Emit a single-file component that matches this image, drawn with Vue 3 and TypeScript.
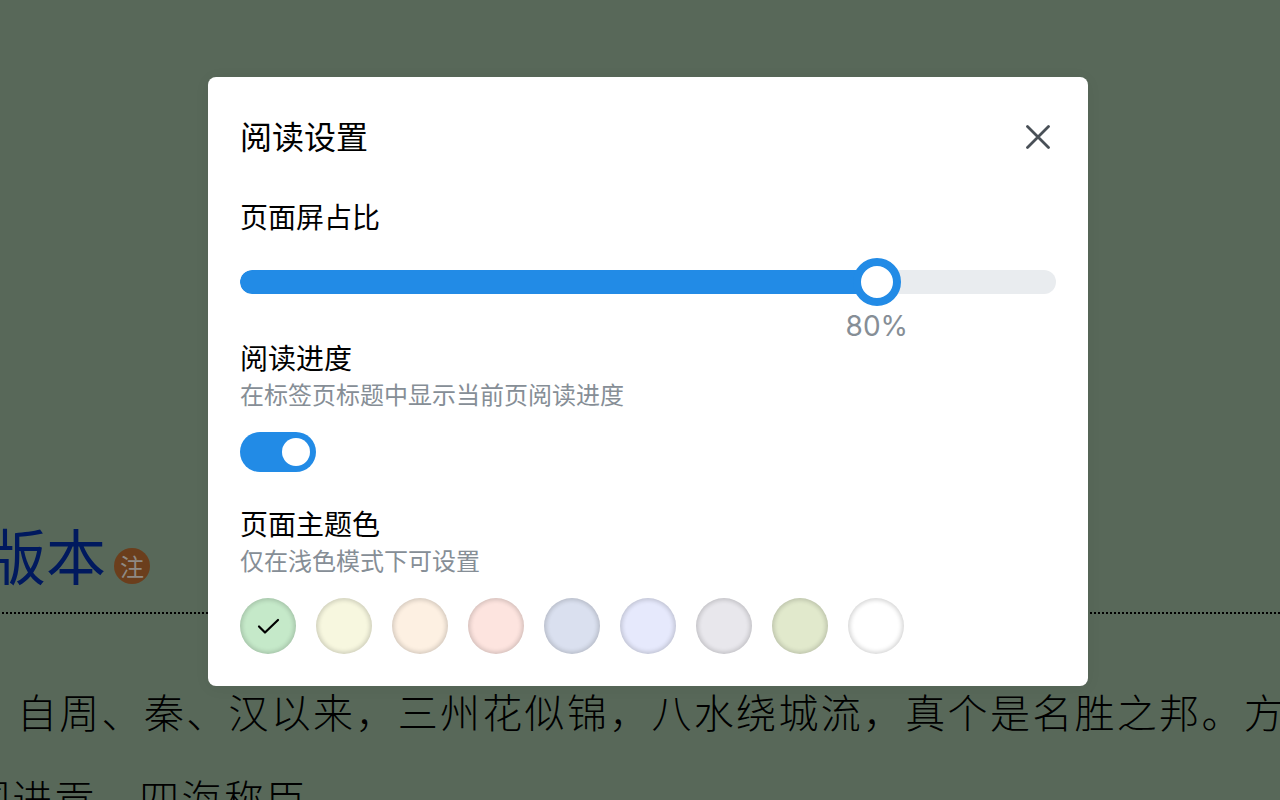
<script setup lang="ts">
import { ref } from 'vue'

const ratio = ref(80)
const progressOn = ref(true)
const selected = ref(0)
const swatches: string[] = [
  '#c5e9c9', '#f7f7df', '#fdf0e2', '#fde4df', '#dae0ef',
  '#e6e9fc', '#e8e7ec', '#e1e9cc', '#ffffff',
]
</script>

<template>
  <div class="page">
    <article class="article">
      <header class="headline">
        <h1 class="book-title">版本</h1>
        <span class="note-badge">注</span>
      </header>
      <p class="line first">自周、秦、汉以来，三州花似锦，八水绕城流，真个是名胜之邦。方</p>
      <p class="line second">国进贡，四海称臣</p>
    </article>

    <div class="overlay">
      <section class="modal">
        <div class="modal-head">
          <h2 class="modal-title">阅读设置</h2>
          <button class="close" type="button" aria-label="关闭">
            <svg width="24" height="24" viewBox="0 0 24 24" fill="none" stroke="#495057" stroke-width="2.8" stroke-linecap="round">
              <path d="M1.5 1.5 22.5 22.5M22.5 1.5 1.5 22.5" />
            </svg>
          </button>
        </div>

        <div class="section">
          <div class="label">页面屏占比</div>
          <div class="slider">
            <div class="track">
              <div class="fill" :style="{ width: `calc(${ratio}% + ${24 - ratio * 0.5}px)` }"></div>
            </div>
            <div class="thumb" :style="{ left: `calc(${ratio}% - ${ratio * 0.5}px)` }">
              <span class="thumb-value">{{ ratio }}%</span>
            </div>
          </div>
        </div>

        <div class="section">
          <div class="label">阅读进度</div>
          <div class="desc">在标签页标题中显示当前页阅读进度</div>
          <button class="switch" :class="{ on: progressOn }" type="button" @click="progressOn = !progressOn">
            <span class="knob"></span>
          </button>
        </div>

        <div class="section">
          <div class="label">页面主题色</div>
          <div class="desc">仅在浅色模式下可设置</div>
          <div class="swatches">
            <button
              v-for="(color, i) in swatches"
              :key="color"
              class="swatch"
              type="button"
              :style="{ backgroundColor: color }"
              @click="selected = i"
            >
              <svg v-if="selected === i" width="56" height="56" viewBox="0 0 56 56" fill="none" stroke="#000" stroke-width="2.2" stroke-linecap="round" stroke-linejoin="round">
                <path d="M19 28.5 25 34.5 38 22" />
              </svg>
            </button>
          </div>
        </div>
      </section>
    </div>
  </div>
</template>

<style scoped>
.page {
  position: relative;
  width: 100%;
  height: 800px;
  overflow: hidden;
  background: #d2f8d4;
  font-family: "Noto Sans CJK SC", "Noto Sans", sans-serif;
}

.article {
  padding-top: 520px;
  white-space: nowrap;
}

.headline {
  display: flex;
  align-items: center;
  gap: 8px;
  height: 92px;
  margin-left: -14px;
  border-bottom: 2px dotted #000;
  box-sizing: content-box;
}

.book-title {
  margin: 0 0 24px;
  font-size: 60px;
  line-height: 72px;
  font-weight: 400;
  color: #003de0;
}

.note-badge {
  position: relative;
  z-index: 2;
  display: flex;
  align-items: center;
  justify-content: center;
  width: 36px;
  height: 36px;
  border-radius: 50%;
  background: #6b3e1c;
  color: #8f8a85;
  font-size: 24px;
  line-height: 1;
}

.line {
  margin: 0;
  font-size: 40px;
  font-weight: 300;
  letter-spacing: 2.3px;
  line-height: 86px;
  color: #000;
}

.line.first {
  margin-top: 54px;
  margin-left: 17px;
}

.line.second {
  margin-left: -30px;
}

.overlay {
  position: absolute;
  z-index: 1;
  inset: 0;
  padding-left: 16px;
  background: rgba(0, 0, 0, 0.58);
  display: flex;
  justify-content: center;
  align-items: flex-start;
}

.modal {
  box-sizing: border-box;
  width: 880px;
  height: 609px;
  margin-top: 77px;
  padding: 32px;
  background: #fff;
  border-radius: 8px;
  box-shadow: 0 2px 16px rgba(0, 0, 0, 0.05);
  color: #000;
}

.modal-head {
  display: flex;
  align-items: center;
  justify-content: space-between;
  height: 56px;
}

.modal-title {
  margin: 0 0 4px;
  font-size: 32px;
  font-weight: 400;
  line-height: 52px;
}

.close {
  display: flex;
  align-items: center;
  justify-content: center;
  width: 37px;
  height: 38px;
  padding: 0;
  border: 0;
  background: transparent;
}

.section {
  margin-top: 32px;
}

.label {
  padding-bottom: 2px;
  font-size: 28px;
  line-height: 38px;
}

.desc {
  margin-top: -2px;
  font-size: 24px;
  line-height: 36px;
  color: #868e96;
}

.slider {
  position: relative;
  display: flex;
  align-items: center;
  height: 48px;
  margin-top: 21px;
}

.track {
  width: 100%;
  height: 24px;
  border-radius: 12px;
  background: #e9ecef;
  overflow: hidden;
}

.fill {
  height: 100%;
  background: #228be6;
  border-radius: 12px 0 0 12px;
}

.thumb {
  position: absolute;
  top: 0;
  box-sizing: border-box;
  width: 48px;
  height: 48px;
  border: 8px solid #228be6;
  border-radius: 50%;
  background: #fff;
}

.thumb-value {
  position: absolute;
  top: 40px;
  left: 50%;
  transform: translateX(-50%);
  font-family: Inter, "Noto Sans", sans-serif;
  font-size: 28px;
  line-height: 40px;
  color: #868e96;
}

.switch {
  display: flex;
  align-items: center;
  justify-content: flex-start;
  width: 76px;
  height: 40px;
  margin-top: 20px;
  padding: 0 6px;
  border: 0;
  border-radius: 20px;
  background: #e9ecef;
}

.switch.on {
  justify-content: flex-end;
  background: #228be6;
}

.knob {
  width: 28px;
  height: 28px;
  border-radius: 50%;
  background: #fff;
}

.swatches {
  display: flex;
  gap: 20px;
  margin-top: 20px;
}

.swatch {
  display: block;
  box-sizing: border-box;
  width: 56px;
  height: 56px;
  padding: 0;
  border: 0;
  border-radius: 50%;
  box-shadow: inset 0 0 4px 2px rgba(0, 0, 0, 0.16);
}

.swatch svg {
  display: block;
}
</style>
